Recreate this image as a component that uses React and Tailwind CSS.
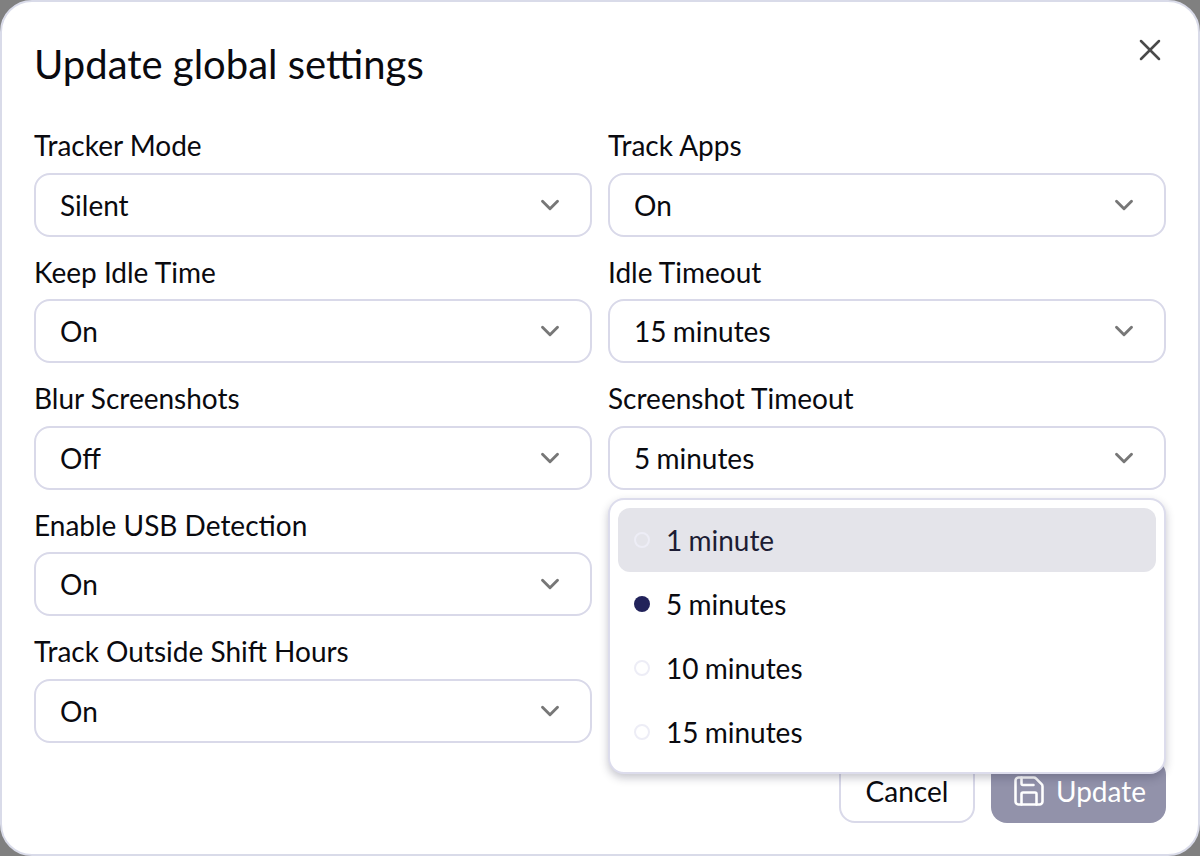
import React from 'react';
import { X, ChevronDown, Save } from 'lucide-react';

const fields = [
  { label: 'Tracker Mode', value: 'Silent' },
  { label: 'Track Apps', value: 'On' },
  { label: 'Keep Idle Time', value: 'On' },
  { label: 'Idle Timeout', value: '15 minutes' },
  { label: 'Blur Screenshots', value: 'Off' },
  { label: 'Screenshot Timeout', value: '5 minutes', menu: true },
  { label: 'Enable USB Detection', value: 'On' },
  { label: 'Track Outside Shift Hours', value: 'On', left: true },
];

const options = ['1 minute', '5 minutes', '10 minutes', '15 minutes'];

function Menu() {
  return (
    <div className="absolute left-0 right-0 top-[72.5px] z-10 rounded-2xl border-2 border-[#dcdcec] bg-white p-2 shadow-[0_4px_8px_rgba(30,30,60,0.25)]">
      {options.map((option, index) => (
        <div
          key={option}
          className={`flex h-16 items-center rounded-xl pl-4 text-[28px] [word-spacing:-1px] ${index === 0 ? 'bg-[#e4e4ea] text-[#1c1c34]' : 'text-[#0a0a0f]'}`}
        >
          {index === 1 ? (
            <span className="mr-4 h-4 w-4 rounded-full bg-[#21225a]" />
          ) : (
            <span className="mr-4 h-4 w-4 rounded-full border-2 border-[#ededf6]" />
          )}
          {option}
        </div>
      ))}
    </div>
  );
}

function SelectField({ label, value, menu, left }) {
  return (
    <div className={`relative ${left ? 'col-start-1' : ''}`}>
      <div className="mb-[12.5px] h-[30px] text-[28px] leading-[30px] text-[#0a0a0f]">{label}</div>
      <div className="relative">
        <div className="flex h-16 items-center justify-between rounded-2xl border-2 border-[#d9d9e9] bg-white pl-6 pr-[25px] text-[28px] text-[#0a0a0f]">
          <span className="[word-spacing:-1px]">{value}</span>
          <ChevronDown size={30} strokeWidth={2.3} className="text-[#777777]" />
        </div>
        {menu && <Menu />}
      </div>
    </div>
  );
}

export default function App() {
  return (
    <div className="h-[856px] w-[1200px] bg-[#808080] font-['Lato',sans-serif]">
      <div className="relative h-full rounded-[32px] border-2 border-[#d9dbe9] bg-white px-[32px] pt-[37px]">
        <h1 className="h-[50px] text-[40px] leading-[50px] text-[#0a0a0f]">Update global settings</h1>
        <button className="absolute right-[30px] top-[30px] text-[#4a4a4a]">
          <X size={36} strokeWidth={1.7} />
        </button>
        <div className="mt-[41px] grid grid-cols-2 gap-x-4 gap-y-5">
          {fields.map((field) => (
            <SelectField key={field.label} {...field} />
          ))}
        </div>
        <div className="mt-[16.5px] flex justify-end gap-4">
          <button className="h-[64px] w-[136px] rounded-2xl border-2 border-[#d9d9e9] bg-white text-[28px] text-[#0a0a0f]">
            Cancel
          </button>
          <button className="flex h-[64px] w-[175px] items-center justify-center gap-[9px] rounded-2xl bg-[#9292aa] text-[28px] text-white">
            <Save size={36} strokeWidth={1.7} />
            Update
          </button>
        </div>
      </div>
    </div>
  );
}
